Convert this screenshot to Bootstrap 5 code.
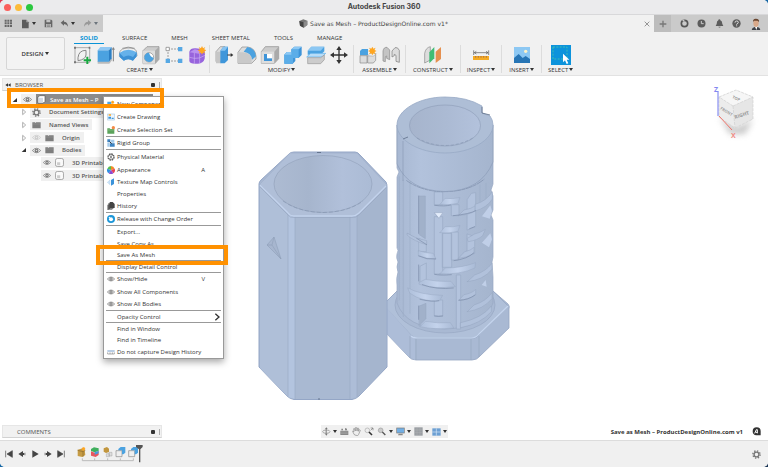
<!DOCTYPE html>
<html lang="en">
<head>
<meta charset="utf-8">
<meta name="viewport" content="width=device-width, initial-scale=1">
<title>Autodesk Fusion 360</title>
<link href="https://cdn.jsdelivr.net/npm/bootstrap@5.3.0/dist/css/bootstrap.min.css" rel="stylesheet">
<style>
html{background:linear-gradient(135deg,#e2384f 0 8px,#1767a5 8px 70%,#1b3656 70%)}
body{font-family:"Open Sans","Noto Sans",sans-serif;font-size:6px;line-height:10px;color:#333;background:transparent}
button,a{color:inherit;text-decoration:none;font:inherit}
button{padding:0;border:0;background:transparent}
svg{display:block;flex:none}
.app{min-height:100vh;border-radius:5px;overflow:hidden;background:#fff}
.titlebar{height:15px;background:#ebebed;border-bottom:1px solid #d8d8da;display:grid;grid-template-columns:1fr auto 1fr;align-items:center}
.titlebar h1{font:700 7px/12px Inter,sans-serif;color:#444;margin:0}
.lights{gap:4px;padding-left:4px}
.light{width:7px;height:7px;border-radius:50%}
.l-r{background:#fb5e5b}.l-y{background:#fcbb3a}.l-g{background:#2bc840}
.docbar{height:17px;background:#f1f1f1}
.quick,.account{background:#cacaca}
.quick{width:103px;padding:0 5px 0 4px}
.account{width:114px;padding-right:6px}
.plus-tab{width:17px;background:#bdbdbd}
.doctitle{gap:2px;font-size:6px;font-weight:500;color:#444;font-family:"DejaVu Sans",sans-serif}
.ribbon{background:#f1f1f1;border-bottom:1px solid #e2e2e2;padding-left:6px;height:44px}
.groups{padding-left:5px}
.design{width:59px;height:33px;border:1px solid #d6d6d6;border-radius:2px;margin-top:5px;font-weight:600;background:#f3f3f3}
.tabs{gap:12px;padding-left:9px;height:13px;align-items:flex-start}
.tabs a{padding:1px 6px 0;height:12px;line-height:10px;font-weight:500}
.tabs a.on{color:#0a93d6;font-weight:700;border-bottom:1px solid #0a93d6}
.grp{border-right:1px solid #dcdcdc;height:28px}
.grp:last-child{border-right:0}
.p-a{padding:0 2px}.p-b{padding:0 4px}.p-c{padding:0 7px}.p-d{padding:0 6px}
.lbl{line-height:8px;margin-top:1px;white-space:nowrap}
.caret:after{content:"";display:inline-block;border:2px solid transparent;border-top:3px solid currentColor;border-bottom:0;margin-left:2px;vertical-align:1px}
.lbl.caret:after{margin-left:1px}
.tools{gap:3px;height:20px}
.stage{display:grid;grid-template-columns:1fr auto 1fr;grid-template-rows:1fr auto}
.panelhead{width:160px;height:13px;background:#f1f1f1;border:1px solid #e6e6e6;border-bottom-color:#d2d2d2;margin-left:2px;padding:0 1px 0 2px;color:#555}
.panelhead.first{margin-top:2px}
.dot{width:4px;height:4px;border-radius:1px;background:#333;margin-right:4px}
.grip{width:1px;height:6px;background:#aaa}
.tree{margin:2px 0 0;padding:0;list-style:none;font-weight:600;color:#555}
.tree li{height:13px;display:flex;align-items:center}
.tree li.tight{height:12px}
.chip{background:#f0f0f0;height:11px;display:flex;align-items:center;gap:4px;padding:0 4px 0 2px;white-space:nowrap}
.tw{width:8px;margin:0 2px 0 0}
.in0{padding-left:11px}.in1{padding-left:20px}.in2{padding-left:41px}
.rootlabel{background:#8c8c8c;color:#fff;width:117px;padding-left:1px}
.model{margin-top:13px}
.cube{margin:5px 8px 0 0;justify-self:end}
.navbox{background:#f0f0f0;height:13px;padding:0 1px;gap:3px;justify-self:center}
.docname{font-weight:700;padding-right:7px;gap:9px;color:#333}
.stagefoot{margin-bottom:2px}
.timeline{height:27px;background:#f0f0f0;border-top:1px solid #dcdcdc;padding:0 7px 0 5px}
.play{gap:5px}
.feat{margin-left:11px}
/* context menu opened over the browser tree */
.ctx{position:absolute;left:103px;top:20px;width:121px;background:#fff;border:1px solid #999;box-shadow:0 3px 7px rgba(0,0,0,.35);padding:0 3px;color:#333}
.ctx button{display:flex;align-items:center;width:100%;height:13px;text-align:left;white-space:nowrap}
.ctx button.h12{height:12px}.ctx button.h11{height:11px}
.ctx .ic{width:10px;display:flex;flex:none}
.ctx .key{margin-left:auto;margin-right:15px}
.ctx hr{margin:0 -1px;border:0;height:1px;background:#999;opacity:1}
.mark1,.mark2{position:absolute;border:4px solid #ff9100;pointer-events:none}
.mark1{left:7px;top:12px;width:157px;height:20px}
.mark2{left:96px;top:169px;width:132px;height:20px}
</style>
</head>
<body>
<svg width="0" height="0" class="position-absolute" aria-hidden="true">
<defs>
<symbol id="eye" viewBox="0 0 24 18"><path d="M1 9Q12-3 23 9Q12 21 1 9Z" fill="#eee" stroke="#777" stroke-width="2"/><circle cx="12" cy="9" r="5" fill="#777"/><circle cx="12" cy="9" r="2" fill="#ddd"/></symbol>
<symbol id="folder" viewBox="0 0 27 24"><path d="M1 4h8l3 3V4h14v18H1Z" fill="#7d7d7d"/><path d="M1 9h25" stroke="#aaa"/></symbol>
<symbol id="closed" viewBox="0 0 24 24"><path d="M8 4L17 12L8 20Z" fill="#fff" stroke="#888" stroke-width="2"/></symbol>
<symbol id="open" viewBox="0 0 24 24"><path d="M18 6V18H5Z" fill="#333"/></symbol>
<symbol id="body" viewBox="0 0 26 26"><rect x="1.500" y="1.500" width="23" height="23" rx="5" fill="#fafafa" stroke="#888" stroke-width="2"/><path d="M6 12h9v9H6Z" fill="#ccc"/></symbol>
<symbol id="gear" viewBox="0 0 26 26"><circle cx="13" cy="13" r="7" fill="none" stroke="#777" stroke-width="4"/><circle cx="13" cy="13" r="10.500" fill="none" stroke="#777" stroke-width="4" stroke-dasharray="4 4.250"/></symbol>
<symbol id="star" viewBox="0 0 24 24"><path d="M12 0l3 6 6-3-3 6 6 3-6 3 3 6-6-3-3 6-3-6-6 3 3-6-6-3 6-3-3-6 6 3Z" fill="#ffa51f"/></symbol>
</defs>
</svg>

<div class="app d-flex flex-column">
<header>
  <div class="titlebar">
    <div class="lights d-flex"><span class="light l-r"></span><span class="light l-y"></span><span class="light l-g"></span></div>
    <h1>Autodesk Fusion 360</h1><span></span>
  </div>
  <div class="docbar d-flex">
    <div class="quick d-flex align-items-center justify-content-between">
      <button aria-label="Data panel"><svg width="9" height="9" viewBox="0 0 27 27" fill="#666"><path d="M2 2h6v6H2zM10 2h6v6h-6zM18 2h6v6h-6zM2 10h6v6H2zM10 10h6v6h-6zM18 10h6v6h-6zM2 18h6v6H2zM10 18h6v6h-6zM18 18h6v6h-6z"/></svg></button>
      <button aria-label="File" class="caret d-flex align-items-center"><svg width="9" height="10" viewBox="0 0 27 30"><path d="M3 2h13l7 8v18H3z" fill="#5c5c5c"/><path d="M16 2v8h7" fill="#aaa"/></svg></button>
      <button aria-label="Save"><svg width="9" height="9" viewBox="0 0 27 27"><path d="M2 2h20l3 3v20H2z" fill="#666"/><path d="M7 3h12v7H7zM6 15h15v10H6z" fill="#c4c4c4"/><path d="M8 18h11M8 22h11" stroke="#666" stroke-width="2"/></svg></button>
      <button aria-label="Undo" class="caret d-flex align-items-center"><svg width="9" height="9" viewBox="0 0 27 27"><path d="M2 11L12 3v5q11 0 12 15q-4-8-12-8v5z" fill="#666"/></svg></button>
      <button aria-label="Redo" class="caret d-flex align-items-center text-secondary" disabled><svg width="9" height="9" viewBox="0 0 27 27"><path d="M25 11L15 3v5Q4 8 3 23q4-8 12-8v5z" fill="#999"/></svg></button>
    </div>
    <div class="flex-grow-1 d-flex align-items-center pe-1">
      <div class="doctitle flex-grow-1 d-flex align-items-center justify-content-center"><svg width="9" height="9" viewBox="0 0 27 27"><path d="M1 6L13 1l12 4v13l-11 8L3 20z" fill="#777"/><path d="M1 6l13 4v16L3 20z" fill="#444"/><path d="M14 10l11-5v13l-11 8z" fill="#8b8b8b"/></svg>Save as Mesh – ProductDesignOnline.com v1*</div>
      <button aria-label="Close tab"><svg width="6" height="6" viewBox="0 0 18 18"><path d="M2 2l14 14M16 2L2 16" stroke="#666" stroke-width="2"/></svg></button>
    </div>
    <div class="account d-flex align-items-center justify-content-between">
      <button class="plus-tab h-100 d-flex align-items-center justify-content-center" aria-label="New tab"><svg width="8" height="8" viewBox="0 0 24 24"><path d="M12 2v20M2 12h20" stroke="#777" stroke-width="4"/></svg></button>
      <button aria-label="Extensions"><svg width="9" height="9" viewBox="0 0 27 27"><circle cx="13.500" cy="13.500" r="9.500" fill="none" stroke="#555" stroke-width="5"/><path d="M8 3l5 4" stroke="#ccc" stroke-width="4"/></svg></button>
      <button aria-label="Job status"><svg width="9" height="9" viewBox="0 0 27 27"><circle cx="13.500" cy="13.500" r="12" fill="#5c5c5c"/><path d="M13 6v8h7" fill="none" stroke="#ccc" stroke-width="3"/></svg></button>
      <button aria-label="Notifications"><svg width="9" height="9" viewBox="0 0 27 27"><path d="M13 1q3 0 3 3q6 2 6 11l3 6H2l3-6Q5 6 10 4q0-3 3-3zM10 23h7q-3 5-7 0z" fill="#5c5c5c"/></svg></button>
      <button aria-label="Help"><svg width="9" height="9" viewBox="0 0 27 27"><circle cx="13.500" cy="13.500" r="12.500" fill="#5c5c5c"/><path d="M9 11q0-5 5-5t5 4q0 3-5 5v2M14 19v3" fill="none" stroke="#ddd" stroke-width="3"/></svg></button>
      <button aria-label="Account"><svg width="12" height="12" viewBox="0 0 36 36"><path d="M5 36q1-8 9-9h9q7 1 8 9z" fill="#3e4249"/><path d="M14 24h9l-4 12z" fill="#fff"/><ellipse cx="18" cy="16" rx="8" ry="11" fill="#d9a98a"/><path d="M9 13Q8 1 18 2q11 0 9 11q-2-4-5-5q-6 1-9 0q-3 1-4 5z" fill="#6b4630"/></svg></button>
    </div>
  </div>
  <div class="ribbon d-flex">
    <button class="design caret">DESIGN</button>
    <div>
      <nav class="tabs d-flex" aria-label="Workspace tabs"><a href="#" class="on">SOLID</a><a href="#">SURFACE</a><a href="#">MESH</a><a href="#">SHEET METAL</a><a href="#">TOOLS</a><a href="#">MANAGE</a></nav>
      <div class="groups d-flex">
        <div class="grp p-a d-flex flex-column align-items-center">
          <div class="tools d-flex">
            <button aria-label="Create sketch"><svg width="20" height="20" viewBox="0 0 60 60"><path d="M9 8H53V52H9Z" fill="none" stroke="#888" stroke-width="2"/><path d="M6 5h6v6H6zM50 5h5v6h-5zM6 49h6v6H6z" fill="#777"/><path d="M18 47V38Q20 16 42 16V30Q40 44 18 47Z" fill="none" stroke="#888" stroke-width="3"/><path d="M46 35v22M35 46h22" stroke="#18a840" stroke-width="6"/></svg></button>
            <button aria-label="Extrude"><svg width="20" height="20" viewBox="0 0 60 60"><path d="M8 48h35l8-8v6l-8 10H8z" fill="#bbb"/><path d="M8 16h34v34H8z" fill="#4ba2e0"/><path d="M8 16l8-10h34l-8 10z" fill="#8fc7f2"/><path d="M42 16l8-10v34l-8 10z" fill="#2c7fc4"/><path d="M55 12v37M52 14l3-6 3 6" stroke="#444" stroke-width="2" fill="none"/></svg></button>
            <button aria-label="Revolve"><svg width="20" height="20" viewBox="0 0 60 60"><path d="M5 21Q9 10 30 9T55 18L57 32L46 43Q30 34 15 42L4 34Z" fill="#eee" stroke="#888" stroke-width="2"/><path d="M4 24q26-18 52-2l-1 13-11 12q-13-8-26 0L5 35z" fill="#65b1ea"/><path d="M4 24l13 12q14-9 28 0l11-14v12L45 47q-15-9-28 0L5 36z" fill="#3d91d5"/><path d="M13 10q17-7 37 0" stroke="#777" stroke-width="2" fill="none"/></svg></button>
            <button aria-label="Hole"><svg width="20" height="20" viewBox="0 0 60 60"><path d="M6 17L18 5h36v38L42 56H6z" fill="#ccc" stroke="#888" stroke-width="2"/><path d="M6 17h36v39H6z" fill="#ddd"/><path d="M42 17L54 5v38L42 56z" fill="#aaa"/><circle cx="24" cy="37" r="14" fill="#fff" stroke="#888" stroke-width="2"/><path d="M24 23a14 14 0 1 0 14 15Q28 36 24 23z" fill="#4ba2e0"/></svg></button>
            <button aria-label="Pattern"><svg width="20" height="20" viewBox="0 0 60 60"><path d="M12 12h36M12 48h36M12 12v36" stroke="#777" stroke-width="2" stroke-dasharray="6 3"/><path d="M6 7h10v10H6z" fill="#fff" stroke="#777" stroke-width="2"/><path d="M42 6h13v13H42zM5 41h13v13H5zM42 41h13v13H42z" fill="#56a8e4"/></svg></button>
            <button aria-label="Create form"><svg width="20" height="20" viewBox="0 0 60 60"><path d="M7 20Q10 9 26 10l23 3q7 4 4 28-4 14-20 15-25 2-26-8z" fill="#9864dd"/><path d="M8 22l15-9 26 6-13 7z" fill="#bb92ef"/><path d="M7 37q16 5 30 2l17-8M22 24v32M38 25v31" stroke="#cdb2f5" stroke-width="2" fill="none"/><use href="#star" x="32" y="3" width="26" height="26"/></svg></button>
          </div>
          <button class="lbl caret">CREATE</button>
        </div>
        <div class="grp p-b d-flex flex-column align-items-center">
          <div class="tools d-flex">
            <button aria-label="Press pull"><svg width="20" height="20" viewBox="0 0 60 60"><path d="M6 20L19 5h14v45H6z" fill="#ddd" stroke="#888" stroke-width="2"/><path d="M6 20h14v35H6z" fill="#c6c6c6"/><path d="M19 17L28 5h14v40L32 55H19z" fill="#3f96da"/><path d="M19 17L28 5h14L33 17z" fill="#87c3f0"/><path d="M40 30h12" stroke="#333" stroke-width="3"/><path d="M50 24l8 6-8 6z" fill="#333"/></svg></button>
            <button aria-label="Fillet"><svg width="20" height="20" viewBox="0 0 60 60"><path d="M3 22L15 6h17q23 3 25 28v8L44 55H3z" fill="#ddd" stroke="#888" stroke-width="2"/><path d="M3 22h16q23 2 25 22v11H3z" fill="#c9c9c9"/><path d="M20 20L31 6q23 3 26 28L45 44Q43 23 20 20z" fill="#4ba2e0"/></svg></button>
            <button aria-label="Shell"><svg width="20" height="20" viewBox="0 0 60 60"><path d="M4 20L16 5h40v36L43 55H4z" fill="#ccc" stroke="#888" stroke-width="2"/><path d="M4 20h39v35H4z" fill="#ddd"/><path d="M43 20L56 5v36L43 55z" fill="#aaa"/><path d="M12 27h24v21H12z" fill="#3e94d8"/><path d="M21 27h15v13H21z" fill="#fff"/></svg></button>
            <button aria-label="Combine"><svg width="20" height="20" viewBox="0 0 60 60"><path d="M4 29l8-8h13V13l9-8h22v25l-9 9H37v9l-8 8H4z" fill="#3e94d8"/><path d="M4 29l8-8h13v-8h22v26H30v17H4z" fill="#5bade8"/><path d="M25 13l9-8h22l-9 8zM4 29l8-8h13v8z" fill="#8cc8f4"/></svg></button>
            <button aria-label="Split"><svg width="20" height="20" viewBox="0 0 60 60"><path d="M5 17L16 5h39v14L44 29H5z" fill="#4ba2e0"/><path d="M5 17L16 5h39L44 17z" fill="#8bc7f3"/><path d="M2 36L14 25h45L48 36z" fill="#b8ddf8" stroke="#58aee9" stroke-width="2"/><path d="M5 38h39l11-8v14L44 56H5z" fill="#ccc" stroke="#999" stroke-width="2"/></svg></button>
            <button aria-label="Move"><svg width="20" height="20" viewBox="0 0 60 60"><path d="M30 9v42M9 30h42" stroke="#333" stroke-width="4"/><path d="M30 3l8 12H22zM30 57l8-12H22zM3 30l12-8v16zM57 30l-12-8v16z" fill="#333"/></svg></button>
          </div>
          <button class="lbl caret">MODIFY</button>
        </div>
        <div class="grp p-b d-flex flex-column align-items-center">
          <div class="tools d-flex">
            <button aria-label="New component"><svg width="20" height="20" viewBox="0 0 60 60"><path d="M6 18l6-6h18v19H6z" fill="#4ba2e0"/><path d="M6 32h21v22H6zM29 32h18l6-6v20l-7 8H29z" fill="#ddd" stroke="#888" stroke-width="2"/><path d="M29 32l6-6h19l-7 7z" fill="#f5f5f5" stroke="#888"/><use href="#star" x="30" y="5" width="26" height="26"/></svg></button>
            <button aria-label="Joint"><svg width="20" height="20" viewBox="0 0 60 60"><path d="M6 48V18Q8 6 18 7L26 15V44L17 40V33L13 35V50Z" fill="#c4c4c4" stroke="#888" stroke-width="2"/><path d="M55 52V16Q50 5 42 8L33 18V36L40 32V28L45 31V49Z" fill="#ddd" stroke="#777" stroke-width="2"/></svg></button>
          </div>
          <button class="lbl caret">ASSEMBLE</button>
        </div>
        <div class="grp p-c d-flex flex-column align-items-center">
          <div class="tools d-flex"><button aria-label="Offset plane"><svg width="20" height="20" viewBox="0 0 60 60"><path d="M5 25Q8 8 22 5V45L5 54z" fill="#ddd" stroke="#888" stroke-width="2"/><path d="M19 22L34 6v34L19 55z" fill="#3fbd74"/><path d="M38 20L54 6v36L38 54z" fill="#e5904f"/></svg></button></div>
          <button class="lbl caret">CONSTRUCT</button>
        </div>
        <div class="grp p-d d-flex flex-column align-items-center">
          <div class="tools d-flex"><button aria-label="Measure"><svg width="20" height="20" viewBox="0 0 60 60"><path d="M8 16v14M53 16v14M10 23h41M16 19l-6 4 6 4M45 19l6 4-6 4" stroke="#555" stroke-width="2" fill="none"/><path d="M6 33h48v12H6z" fill="#f4aa23"/><path d="M14 33v5M22 33v5M30 33v5M38 33v5M46 33v5" stroke="#855" stroke-width="2"/></svg></button></div>
          <button class="lbl caret">INSPECT</button>
        </div>
        <div class="grp p-c d-flex flex-column align-items-center">
          <div class="tools d-flex"><button aria-label="Insert image"><svg width="20" height="20" viewBox="0 0 60 60"><path d="M6 6h48v48H6z" fill="#8dc8f3"/><path d="M6 39l14-12 12 12 9-6 13 9v12H6z" fill="#2775b5"/><circle cx="41" cy="19" r="5" fill="#fff3c8"/></svg></button></div>
          <button class="lbl caret">INSERT</button>
        </div>
        <div class="grp p-d d-flex flex-column align-items-center">
          <div class="tools d-flex"><button aria-label="Select"><svg width="20" height="20" viewBox="0 0 60 60"><path d="M0 0h60v60H0z" fill="#0c93dc"/><path d="M6 6h42v36H6z" fill="none" stroke="#51d2a2" stroke-width="2" stroke-dasharray="6 4"/><path d="M36 26v26l6-6 5 11 5-2-5-11h8z" fill="#fff"/></svg></button></div>
          <button class="lbl caret">SELECT</button>
        </div>
      </div>
    </div>
  </div>
</header>

<main class="stage flex-grow-1 position-relative">
  <aside aria-label="Browser">
    <div class="panelhead first d-flex align-items-center"><svg width="6" height="6" viewBox="0 0 18 18"><path d="M1 9l8-5v10zM9 9l8-5v10z" fill="#333"/></svg><span class="ms-1">BROWSER</span><span class="dot ms-auto"></span><span class="grip"></span></div>
    <ul class="tree">
      <li class="in0"><svg class="tw" width="8" height="8"><use href="#open"/></svg><span class="chip"><svg width="9" height="7"><use href="#eye"/></svg></span><span class="chip rootlabel"><svg width="9" height="9" viewBox="0 0 27 27"><path d="M3 7l5-5h16v17l-5 5H3z" fill="#fff" stroke="#555" stroke-width="2"/><path d="M4 8h14v15H4z" fill="#d2d9e2"/></svg><span>Save as Mesh – P</span></span></li>
      <li class="in1 tight"><svg class="tw" width="8" height="8"><use href="#closed"/></svg><span class="chip"><svg width="9" height="9"><use href="#gear"/></svg><span class="ps-1">Document Settings</span></span></li>
      <li class="in1"><svg class="tw" width="8" height="8"><use href="#closed"/></svg><span class="chip"><svg width="9" height="8"><use href="#folder"/></svg><span class="ps-1">Named Views</span></span></li>
      <li class="in1"><svg class="tw" width="8" height="8"><use href="#closed"/></svg><span class="chip"><svg width="9" height="7" opacity=".3"><use href="#eye"/></svg><svg width="9" height="8"><use href="#folder"/></svg><span class="ps-1">Origin</span></span></li>
      <li class="in1 tight"><svg class="tw" width="8" height="8"><use href="#open"/></svg><span class="chip"><svg width="9" height="7"><use href="#eye"/></svg><svg width="9" height="8"><use href="#folder"/></svg><span class="ps-1">Bodies</span></span></li>
      <li class="in2"><span class="chip"><svg width="8" height="7"><use href="#eye"/></svg><svg width="9" height="9"><use href="#body"/></svg><span class="ps-1">3D Printabl</span></span></li>
      <li class="in2"><span class="chip"><svg width="8" height="7"><use href="#eye"/></svg><svg width="9" height="9"><use href="#body"/></svg><span class="ps-1">3D Printabl</span></span></li>
    </ul>
  </aside>

  <svg class="model" width="256" height="316" viewBox="256 89 256 316" role="img" aria-label="Hexagonal sleeve and maze cylinder">
    <defs>
      <linearGradient id="g1" x1="0" x2="1"><stop offset="0" stop-color="#adbbd2"/><stop offset=".35" stop-color="#a6b5cd"/><stop offset=".7" stop-color="#b1c0da"/><stop offset="1" stop-color="#abbbd5"/></linearGradient>
      <linearGradient id="g2" x1="0" x2="1"><stop offset="0" stop-color="#a8b8d2"/><stop offset=".25" stop-color="#b2c2dc"/><stop offset="1" stop-color="#a5b5ce"/></linearGradient>
      <linearGradient id="g3" x1="0" x2="1"><stop offset="0" stop-color="#a6b4cc"/><stop offset=".5" stop-color="#abbad3"/><stop offset="1" stop-color="#b3c2dc"/></linearGradient>
      <linearGradient id="g4" x1="0" x2="1"><stop offset="0" stop-color="#aebfda"/><stop offset=".5" stop-color="#c4d3ec"/><stop offset="1" stop-color="#a9bad5"/></linearGradient>
    </defs>
    <g stroke-linejoin="round">
    <path d="M386 302L397 291H493L508 304Q510 306 509 309V328L480 356Q477 360 472 360H416Q411 360 408 356L386 333Z" fill="#a9b9d3" stroke="#94a5c1" stroke-width=".8"/>
    <path d="M386 302L397 291H493L508 306L479 335Q477 338 474 338H415L411 335L386 308Z" fill="#b0c0d9" stroke="#94a5c1" stroke-width=".6"/>
    <path d="M386 307L411 335L415 340V360L408 356L386 333Z" fill="#adbdd8"/>
    <path d="M410 336v22M416 339v21M471 339v21M479 336v21" stroke="#94a4be" stroke-width=".6"/>
    <path d="M411 336Q413 338 418 338H471Q476 338 479 334L508 306" fill="none" stroke="#c5d5ee" stroke-width="1.200"/>
    <ellipse cx="445" cy="305" rx="50" ry="28" fill="#a9b9d3" stroke="#98a8c3" stroke-width=".7"/>
    <path d="M397 125V168L399 172L397 177V248Q399 250 397 254Q396 258 398 262Q396 267 398 272Q396 278 397 285V303Q406 328 445 329Q484 328 493 303V277L492 262L493 257V220L491 215L493 210V196L491 190L493 184V160V125Z" fill="url(#g2)" stroke="#98a8c3" stroke-width=".7"/>
    </g>
    <g transform="translate(390 170) scale(.333333)" fill="none" stroke-linecap="round" stroke-linejoin="round">
      <g stroke="#9dadc7" stroke-width="2">
        <path d="M40 30V440M60 32V430M28 20V390M270 45V105M288 40V100M52 190Q80 210 110 222"/>
      </g>
      <g fill="#b3c3dd" stroke="#9aaac5" stroke-width="2">
        <path d="M134 66h24v38h-24zM134 140h24v172h-24zM158 190h27v102h-27zM185 186h20v84h-20zM185 104h22v33h-22zM200 315h12v162h-12zM134 390h24v48h-24zM109 218V245H86V206z"/>
        <path d="M232 88L244 70L257 68V170L232 180ZM109 280V328L90 340V290ZM232 192L254 200V250L232 258Z"/>
      </g>
      <g fill="url(#g4)" stroke="#9aaac5" stroke-width="1.500">
        <path d="M150 103L165 85Q190 88 210 82L204 100Q178 106 150 103Z"/>
        <path d="M150 188L165 170Q190 173 210 166L204 184Q178 191 150 188Z"/>
        <path d="M150 311L166 294Q215 294 257 278L255 294Q210 315 150 311Z"/>
        <path d="M86 242Q106 250 130 250L138 267Q110 267 86 257Z"/>
        <path d="M88 337L106 328Q140 336 183 334L196 350Q132 358 88 343Z"/>
        <path d="M54 354Q90 375 158 376L148 393Q96 396 60 370Z"/>
        <path d="M90 470L106 454Q145 461 181 458L192 474Q132 480 90 470Z"/>
      </g>
      <g fill="#b1c1db" stroke="#95a5c0" stroke-width="1.500">
        <path d="M52 190Q80 208 110 212V224Q72 214 52 196Z"/>
        <path d="M205 137L222 120Q245 116 257 107V122Q237 135 205 137Z"/>
        <path d="M205 265L224 245Q242 242 252 232V250Q230 264 205 265Z"/>
        <path d="M207 390L222 374Q246 370 257 358V374Q238 390 207 390Z"/>
        <path d="M232 205L254 192Q272 188 286 178L278 197Q264 210 236 215Z"/>
        <path d="M232 335L254 315Q288 304 306 280V298Q280 330 232 335Z"/>
        <path d="M232 425L252 405Q288 394 306 368V386Q280 418 232 425Z"/>
        <path d="M212 458Q276 445 304 408V425Q272 462 212 473Z"/>
        <path d="M256 103Q290 93 307 65V87Q292 112 256 123Z"/>
      </g>
      <path d="M276 139L301 106L306 123L299 146ZM276 218L301 190L306 208L297 232ZM275 345L287 330L290 350Z" fill="#c0cfe8"/>
      <path d="M134 128H158L147 144Z" fill="#e3ecfb" stroke="#8999b4"/>
      <path d="M88 78h18v128l-18-12zM88 408l20-8v46l-20 20z" fill="#a1b1ca" stroke="#96a6c0" stroke-width="1.500"/>
      <g stroke="#7a8ba8" stroke-width="2">
        <path d="M50 32Q95 64 160 65Q237 65 282 28" stroke-dasharray="20 4 9 4"/><path d="M134 106Q165 110 182 105M86 78V190M86 285V333M86 408V448M80 205L110 224M86 258Q110 270 137 267M192 272Q232 267 251 249M190 137Q240 132 257 122M97 344Q140 360 190 354M134 313Q150 317 184 314M207 391Q235 390 255 375M134 438Q145 441 158 438M90 388Q130 397 146 392M239 176L254 170"/>
      </g>
    </g>
    <path d="M397 125V164Q409 191 445 191.500Q481 191 493 162V125Z" fill="url(#g2)"/>
    <path d="M403 141V181M397 125V164M493 125V162M397 164Q409 191 445 191.500Q481 191 493 162" fill="none" stroke="#8797b3" stroke-width=".6"/>
    <path d="M482 108V113L490 116Q493 120 493 125C493 140 471 153 445 153S397 140 397 125S419 97 445 97Q467 97 482 106Z" fill="#aebed6" stroke="#98a9c5" stroke-width=".8"/>
    <path d="M482 107v6l8 2M403 139l5-2" fill="none" stroke="#667791" stroke-width=".9"/>
    <ellipse cx="445" cy="125.500" rx="35.500" ry="20.500" fill="url(#g3)" stroke="#8c9bb6" stroke-width=".6"/>
    <path d="M417 138Q445 153 473 138" stroke="#8595b0" stroke-width=".6" stroke-dasharray="3 2" fill="none"/>
    <path d="M259 184Q259 182 261 180L289 154Q291 152 294 152H355Q358 152 360 155L386 182Q387 184 387 187V367L359 396Q356 399 352 399.500H294Q290 399 287 396L259 367Z" fill="#a9b9d2" stroke="#94a6c6" stroke-width="1"/>
    <path d="M260 186L288 215V397L260 368Z" fill="#afbfd8"/>
    <path d="M288 214H295V399L288 397Z" fill="#b3c4df"/><path d="M350 216H357V397L350 399Z" fill="#adbdd7"/><path d="M357 215L386 186V367L357 397Z" fill="#a5b5ce"/>
    <path d="M288 214V397M295 216V399M350 216V399M357 215V397" stroke="#98a8c3" stroke-width=".6"/>
    <path d="M260 184L290 153H357L387 185L359 214Q357 216 353 216H293Q290 216 287 213Z" fill="#b0bfd8" stroke="#a0b0cb" stroke-width=".7"/>
    <path d="M260 185L288 213Q290 216 294 216H352Q356 216 359 213L386 186" fill="none" stroke="#c3d3ed" stroke-width="1.300"/>
    <path d="M260 187L288 215Q290 218 294 217.500H352Q356 218 359 215L386 188" fill="none" stroke="#95a5c0" stroke-width=".6"/>
    <ellipse cx="323" cy="184" rx="49" ry="28.500" fill="url(#g1)" stroke="#909fb9" stroke-width=".6"/>
    <path d="M283 201Q299 212 323 212.500Q348 212 363 201" fill="none" stroke="#8393ae" stroke-width=".6" stroke-dasharray="4 2"/>
    <path d="M274 237L267 245L281 259ZM274 237L272 245L281 259M267 245L272 245" fill="#a7b6cf" stroke="#8f9fb9" stroke-width=".6"/>
    <path d="M317 152.500h4M318 399h2" stroke="#64748e" stroke-width="1"/>
  </svg>

  <svg class="cube" width="54" height="60" viewBox="706 81 54 60" role="img" aria-label="View cube">
    <defs><filter id="sh" x="-50%" y="-50%" width="200%" height="200%"><feGaussianBlur stdDeviation="3"/></filter></defs>
    <path d="M719 116L736 128 753 119 745 134 730 134Z" fill="#999" opacity=".55" filter="url(#sh)"/>
    <path d="M719 97L736 90 753 97V119L735 128L719 117Z" fill="#ececec"/><path d="M719 97L736 90 753 97 733 106Z" fill="#f6f6f6"/><path d="M733 106L753 97V119L735 128Z" fill="#e6e6e6"/>
    <path d="M719 97L736 90 753 97V119L735 128L719 117ZM733 106L753 97M733 106L719 97M733 106L735 128" fill="none" stroke="#d0d0d0" stroke-width=".7" stroke-dasharray="3 1"/>
    <path d="M718 91V116" stroke="#7178ee" stroke-width="1"/><path d="M719 116L732 130" stroke="#ee7168" stroke-width="1"/>
    <g font-family="Open Sans,sans-serif" font-weight="700"><text x="714" y="92" font-size="7" fill="#8388f0">Z</text><text x="731" y="138" font-size="7" fill="#f08b83">X</text>
    <g fill="#999"><text font-size="5" transform="translate(735 119) rotate(-18)">RIGHT</text><text font-size="4" transform="translate(720 109) rotate(32)">FRONT</text><text font-size="4" transform="translate(732 98) rotate(25)">TOP</text></g></g>
  </svg>

  <div class="panelhead stagefoot d-flex align-items-center"><span class="ps-1 ms-2">COMMENTS</span><span class="dot ms-auto"></span><span class="grip"></span></div>
  <div class="navbox stagefoot d-flex align-items-center">
    <button class="caret d-flex align-items-center" aria-label="Orbit"><svg width="9" height="9" viewBox="0 0 27 27"><path d="M13 1l4 5h-3v14h3l-4 6-4-6h2V6H9z" fill="#777"/><ellipse cx="13" cy="14" rx="11" ry="5" fill="none" stroke="#888" stroke-width="2"/></svg></button>
    <button aria-label="Look at"><svg width="9" height="9" viewBox="0 0 27 27"><path d="M1 11h24v13H1zM4 5h5v5H4zM15 3l6 2v5h-6z" fill="#888"/><path d="M3 15h20M3 19h20" stroke="#ccc"/></svg></button>
    <button aria-label="Pan"><svg width="9" height="9" viewBox="0 0 27 27"><path d="M8 24Q3 18 2 12l4 2-1-9 3 0 2 7V2h4l1 10 2-9 3 1-1 9 3-5 3 2-5 12-3 4z" fill="#eee" stroke="#888" stroke-width="2"/></svg></button>
    <button aria-label="Zoom"><svg width="10" height="9" viewBox="0 0 30 27"><circle cx="10" cy="10" r="7" fill="#eee" stroke="#aaa" stroke-width="2"/><path d="M15 15l9 9" stroke="#333" stroke-width="5"/><path d="M20 3h7v7M27 3l-7 7" stroke="#777" stroke-width="2" fill="none"/></svg></button>
    <button class="caret d-flex align-items-center" aria-label="Fit"><svg width="10" height="9" viewBox="0 0 30 27"><circle cx="11" cy="10" r="7" fill="#ccc" stroke="#999" stroke-width="2"/><path d="M16 15l9 9" stroke="#555" stroke-width="4"/></svg></button>
    <button class="caret d-flex align-items-center" aria-label="Display settings"><svg width="9" height="9" viewBox="0 0 27 27"><path d="M1 2h25v17H1z" fill="#777"/><path d="M3 4h21v13H3z" fill="#72aee3"/><path d="M8 20h12v5H6z" fill="#888"/></svg></button>
    <button class="caret d-flex align-items-center" aria-label="Grid"><svg width="9" height="9" viewBox="0 0 27 27"><path d="M1 1h25v25H1z" fill="#9a9ea3"/><path d="M1 9h25M1 17h25M9 1v25M18 1v25" stroke="#bbb"/></svg></button>
    <button class="caret d-flex align-items-center" aria-label="Viewports"><svg width="9" height="8" viewBox="0 0 27 24"><path d="M1 1h25v22H1z" fill="#6c9fd3"/><path d="M13 1v22M1 12h25" stroke="#d7e7f7" stroke-width="2"/></svg></button>
  </div>
  <div class="docname stagefoot d-flex align-items-center justify-content-end">Save as Mesh – ProductDesignOnline.com v1<button aria-label="Autodesk"><svg width="9" height="9" viewBox="0 0 27 27"><path d="M2 13A12 12 0 0 1 26 13V25H13A12 12 0 0 1 2 13Z" fill="#333"/><path d="M8 19L13 8h3v11M11 16h5" fill="none" stroke="#fff" stroke-width="3"/></svg></button></div>

  <div class="ctx">
    <button><span class="ic"><svg width="8" height="8" viewBox="0 0 24 24"><path d="M1 5h12v9H1zM1 15h9v8H1z" fill="#4ba2e0"/><path d="M12 15h10v8H12z" fill="#bbb"/><use href="#star" x="11" y="1" width="12" height="12"/></svg></span>New Component</button>
    <button><span class="ic"><svg width="8" height="8" viewBox="0 0 24 24"><path d="M1 3h22v18H1z" fill="#eef6fd" stroke="#a7c9e6" stroke-width="2"/><path d="M4 11h8v6H4zM14 14h6v4h-6z" fill="#3d94da"/><path d="M5 4h7v4H5z" fill="#ffa51f"/></svg></span>Create Drawing</button>
    <button><span class="ic"><svg width="8" height="8" viewBox="0 0 24 24"><path d="M1 7h7l2 2h12v14H1z" fill="#5ba35b"/><path d="M1 12h21" stroke="#8bc38b" stroke-width="2"/><circle cx="19" cy="5" r="5" fill="#f48a45"/></svg></span>Create Selection Set</button>
    <hr>
    <button class="h12"><span class="ic"><svg width="8" height="8" viewBox="0 0 24 24"><path d="M1 1h9v9H1zM8 13h15v10H8z" fill="#3d83c1"/><path d="M12 2h10v9H12zM1 12h6v11H1z" fill="#a4caea"/><path d="M8 8l6 6" stroke="#333" stroke-width="3"/></svg></span>Rigid Group</button>
    <hr>
    <button><span class="ic"><svg width="8" height="8" viewBox="0 0 24 24"><circle cx="12" cy="12" r="9" fill="none" stroke="#555" stroke-width="4" stroke-dasharray="5 2"/><path d="M6 6l12 12M18 6L6 18M12 3v18" stroke="#777" stroke-width="2"/></svg></span>Physical Material</button>
    <button><span class="ic"><svg width="8" height="8" viewBox="0 0 24 24"><path d="M12 12V0A12 12 0 0 1 23 8z" fill="#f08c28"/><path d="M12 12L23 8A12 12 0 0 1 19 22z" fill="#e8425a"/><path d="M12 12l7 10A12 12 0 0 1 5 22z" fill="#8a4cd0"/><path d="M12 12L5 22A12 12 0 0 1 1 8z" fill="#2f8fe0"/><path d="M12 12L1 8A12 12 0 0 1 12 0z" fill="#57bd50"/></svg></span>Appearance<span class="key">A</span></button>
    <button class="h12"><span class="ic"><svg width="8" height="8" viewBox="0 0 24 24"><path d="M1 13L9 6V20z" fill="#cfe5f8" stroke="#9cc5e8"/><path d="M12 6L21 1V18L12 23z" fill="#3b93da"/></svg></span>Texture Map Controls</button>
    <button class="h12"><span class="ic"></span>Properties</button>
    <button class="h12"><span class="ic"><svg width="8" height="8" viewBox="0 0 24 24"><path d="M1 8h5v14h10v2H1z" fill="#777"/><path d="M4 4h5v15h10v2H4z" fill="#555"/><path d="M8 0h9l6 6v12H8z" fill="#444"/></svg></span>History</button>
    <hr>
    <button class="h12"><span class="ic"><svg width="8" height="8" viewBox="0 0 24 24"><circle cx="12" cy="12" r="12" fill="#1c96d8"/><circle cx="12" cy="13" r="6" fill="#fff"/><path d="M4 7l5-2v5" fill="#fff"/></svg></span>Release with Change Order</button>
    <hr>
    <button class="h12"><span class="ic"></span>Export...</button>
    <button class="h11"><span class="ic"></span>Save Copy As</button>
    <button class="h11"><span class="ic"></span>Save As Mesh</button>
    <hr>
    <button class="h11"><span class="ic"></span>Display Detail Control</button>
    <hr>
    <button class="h12"><span class="ic"><svg width="8" height="6"><use href="#eye"/></svg></span>Show/Hide<span class="key">V</span></button>
    <button><span class="ic"><svg width="8" height="6"><use href="#eye"/></svg></span>Show All Components</button>
    <button class="h12"><span class="ic"><svg width="8" height="6"><use href="#eye"/></svg></span>Show All Bodies</button>
    <hr>
    <button class="h11"><span class="ic"></span>Opacity Control<svg class="ms-auto" width="6" height="8" viewBox="0 0 18 24"><path d="M4 2l11 10L4 22" fill="none" stroke="#333" stroke-width="4"/></svg></button>
    <hr>
    <button class="h11"><span class="ic"></span>Find in Window</button>
    <button class="h12"><span class="ic"></span>Find in Timeline</button>
    <button class="h12"><span class="ic"><svg width="8" height="6" viewBox="0 0 24 18"><path d="M1 3h22v6H1z" fill="#b9cde4"/><path d="M2 10v5h20v-5M9 10v5M16 10v5" stroke="#888" stroke-width="2" fill="none"/></svg></span>Do not capture Design History</button>
  </div>
  <div class="mark1"></div>
  <div class="mark2"></div>
</main>

<footer class="timeline d-flex align-items-center">
  <div class="play d-flex">
    <button aria-label="To start"><svg width="8" height="8" viewBox="0 0 24 24"><path d="M2 2v20M22 2v20L6 12z" fill="#444" stroke="#444" stroke-width="2"/></svg></button>
    <button aria-label="Step back"><svg width="8" height="8" viewBox="0 0 24 24"><path d="M1 12L15 3v6h4v6h-4v6z" fill="#444"/><path d="M21 8v8" stroke="#666" stroke-width="2"/></svg></button>
    <button aria-label="Play"><svg width="8" height="8" viewBox="0 0 24 24"><path d="M4 1l19 11L4 23z" fill="#444"/></svg></button>
    <button aria-label="Step forward"><svg width="8" height="8" viewBox="0 0 24 24"><path d="M23 12L9 3v6H5v6h4v6z" fill="#444"/><path d="M3 8v8" stroke="#666" stroke-width="2"/></svg></button>
    <button aria-label="To end"><svg width="8" height="8" viewBox="0 0 24 24"><path d="M22 2v20M2 2v20l16-10z" fill="#444" stroke="#444" stroke-width="2"/></svg></button>
  </div>
  <svg class="feat" width="68" height="18" viewBox="0 0 204 54" role="img" aria-label="Timeline features"><path d="M19 40v7h153v-7M56 40v7M95 40v7M133 40v7" fill="none" stroke="#bbb" stroke-width="3"/><path d="M5 14l20-6 3 22-9 6-14-3z" fill="#c59b45"/><path d="M5 16l16 4v15M21 20l7-4" stroke="#8c6a2a" stroke-width="2" fill="none"/><use href="#star" x="16" y="5" width="13" height="13"/><path d="M45 12l9-5 14 3v8l-12 4-11-4z" fill="#3faf5d"/><path d="M45 19l11 4 12-4v11l-9 6-14-4z" fill="#e8575e"/><path d="M56 21l12-3v7l-12 4z" fill="#4b98dd"/><path d="M83 10l10-4 6 5v10l-9 3-7-4z" fill="#c2963e"/><path d="M91 26h9v9h-9zM99 22h9v11h-9z" fill="#ddd" stroke="#888"/><path d="M120 17h18v18h-18z" fill="#eee" stroke="#888" stroke-width="2"/><path d="M127 12l7-6h14v17l-6 5h-4V16h-11z" fill="#4ba2e0"/><path d="M158 17h18v18h-18z" fill="#eee" stroke="#888" stroke-width="2"/><path d="M165 12l7-6h14v17l-6 5h-4V16h-11z" fill="#4ba2e0"/><path d="M180 0h20v6l-7 7v39h-4V13l-9-7z" fill="#555"/></svg>
  <button class="ms-auto" aria-label="Preferences"><svg width="9" height="9"><use href="#gear"/></svg></button>
</footer>
</div>
<script src="https://cdn.jsdelivr.net/npm/bootstrap@5.3.0/dist/js/bootstrap.bundle.min.js"></script>
</body>
</html>
